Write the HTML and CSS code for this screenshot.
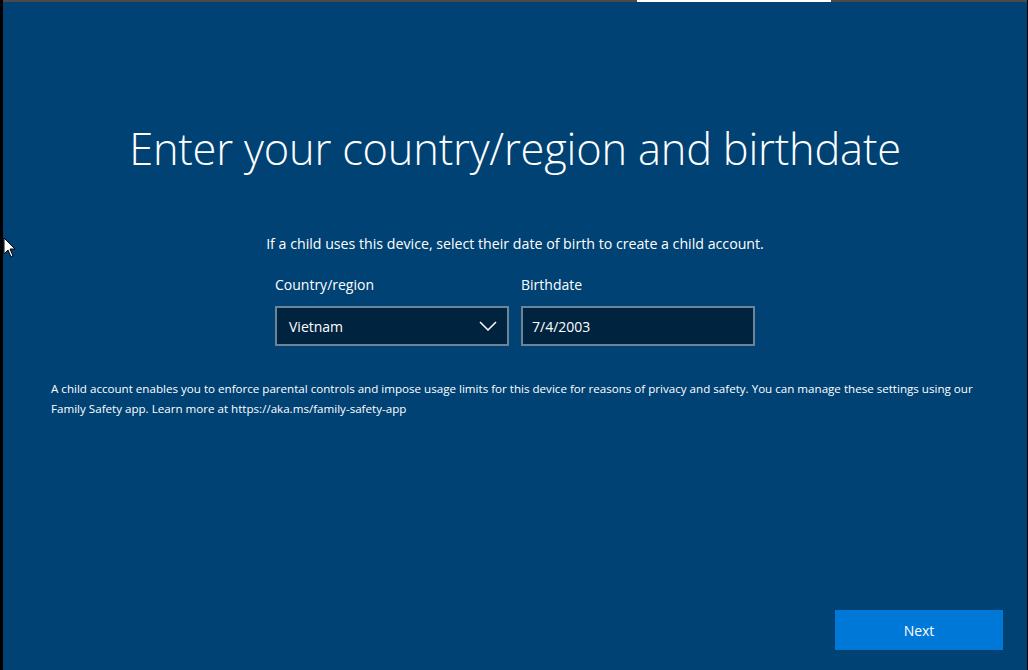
FILE: index.html
```html
<!DOCTYPE html>
<html>
<head>
<meta charset="utf-8">
<link rel="stylesheet" href="styles.css">
</head>
<body>
<div class="screen">
  <div class="progress">
    <div class="seg seg-a"></div>
    <div class="seg seg-active"></div>
    <div class="seg seg-b"></div>
  </div>
  <main class="content">
    <h1 class="title">Enter your country/region and birthdate</h1>
    <p class="subtitle">If a child uses this device, select their date of birth to create a child account.</p>
    <div class="fields">
      <div class="field">
        <label class="label">Country/region</label>
        <div class="box select">
          <span>Vietnam</span>
          <svg class="chev" width="18" height="10" viewBox="0 0 18 10"><path d="M1 1 L9 9 L17 1" fill="none" stroke="#ffffff" stroke-width="1.5"/></svg>
        </div>
      </div>
      <div class="field">
        <label class="label">Birthdate</label>
        <div class="box date"><span>7/4/2003</span></div>
      </div>
    </div>
    <p class="note">A child account enables you to enforce parental controls and impose usage limits for this device for reasons of privacy and safety. You can manage these settings using our Family Safety app. Learn more at https://aka.ms/family-safety-app</p>
    <div class="spacer"></div>
    <div class="actions">
      <button class="next">Next</button>
    </div>
  </main>
  <svg class="cursor" width="14" height="22" viewBox="0 0 14 22">
    <path d="M1 1 L1 17 L5 13 L8 20 L10 19 L7 12 L12 12 Z" fill="#ffffff" stroke="#000000" stroke-width="1"/>
  </svg>
</div>
</body>
</html>
```
FILE: styles.css
```css
html, body {
  margin: 0;
  padding: 0;
  width: 1028px;
  height: 670px;
  overflow: hidden;
  background: #000000;
}
.screen {
  position: relative;
  margin-left: 3px;
  width: 1024px;
  height: 670px;
  background: #004274;
  display: flex;
  flex-direction: column;
  font-family: "Open Sans", "Noto Sans", sans-serif;
  color: #ffffff;
}
.progress {
  display: flex;
  height: 2px;
  flex: none;
}
.seg { height: 2px; background: #4a4a4a; }
.seg-a { width: 634px; }
.seg-active { width: 194px; background: #ffffff; }
.seg-b { flex: 1; }
.content {
  flex: 1;
  display: flex;
  flex-direction: column;
  align-items: center;
}
.title {
  margin: 117px 0 0 0;
  font-weight: 300;
  font-size: 43.4px;
  line-height: 60px;
  letter-spacing: -0.2px;
}
.subtitle {
  margin: 55px 0 0 0;
  font-size: 14.2px;
  line-height: 20px;
}
.fields {
  display: flex;
  gap: 12px;
  margin-top: 21px;
}
.field {
  display: flex;
  flex-direction: column;
  width: 234px;
}
.label {
  font-size: 14px;
  line-height: 20px;
  margin-bottom: 11px;
}
.box {
  height: 36px;
  border: 2px solid #6d8397;
  background: #00233f;
  display: flex;
  align-items: center;
  justify-content: space-between;
  padding: 0 10px 0 12px;
  font-size: 14px;
}
.date { padding-left: 9px; }
.chev { display: block; }
.note {
  align-self: stretch;
  margin: 33px 0 0 48px;
  width: 935px;
  font-size: 11.6px;
  line-height: 20px;
}
.spacer { flex: 1; }
.actions {
  align-self: stretch;
  display: flex;
  justify-content: flex-end;
  padding: 0 24px 20px 0;
}
.next {
  width: 168px;
  height: 40px;
  border: none;
  background: #0078d7;
  color: #ffffff;
  font-family: "Open Sans", "Noto Sans", sans-serif;
  font-size: 14px;
}
.cursor {
  position: absolute;
  left: 0px;
  top: 237px;
}
```
